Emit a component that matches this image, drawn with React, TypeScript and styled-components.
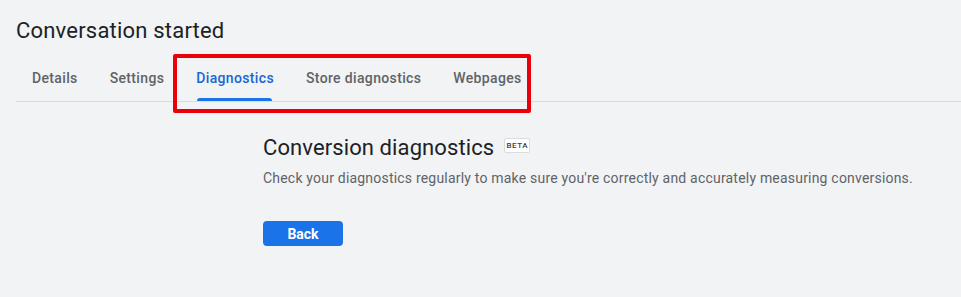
import React from 'react';
import styled, { createGlobalStyle } from 'styled-components';

const GlobalStyle = createGlobalStyle`
  html, body {
    margin: 0;
    padding: 0;
    background: #f1f3f4;
  }
  body {
    font-family: Roboto, "Liberation Sans", Arial, sans-serif;
    color: #202124;
  }
`;

const tabs = ['Details', 'Settings', 'Diagnostics', 'Store diagnostics', 'Webpages'];

export default function App() {
  const active = 'Diagnostics';

  return (
    <Page>
      <GlobalStyle />
      <Title>Conversation started</Title>
      <TabBar>
        {tabs.map(tab => (
          <Tab key={tab} active={tab === active}>
            {tab}
          </Tab>
        ))}
        <Highlight />
      </TabBar>
      <Content>
        <HeadingRow>
          <Heading>Conversion diagnostics</Heading>
          <Badge>BETA</Badge>
        </HeadingRow>
        <Description>
          Check your diagnostics regularly to make sure you're correctly and accurately measuring conversions.
        </Description>
        <BackButton>Back</BackButton>
      </Content>
    </Page>
  );
}

const Page = styled.div`
  width: 961px;
  height: 297px;
  box-sizing: border-box;
  padding: 16px 0 0 16px;
  overflow: hidden;
`;

const Title = styled.h1`
  margin: 0;
  font-size: 22px;
  font-weight: 400;
  line-height: 30px;
  letter-spacing: 0.2px;
  color: #202124;
`;

const TabBar = styled.div`
  position: relative;
  display: flex;
  margin-top: 13px;
  border-bottom: 1px solid #dadce0;
`;

const Tab = styled.div<{ active?: boolean }>`
  position: relative;
  box-sizing: border-box;
  padding: 0 16px 4px;
  height: 42px;
  display: flex;
  align-items: center;
  font-size: 14px;
  font-weight: 500;
  letter-spacing: 0.35px;
  color: ${p => (p.active ? '#1967d2' : '#5f6368')};

  &::after {
    content: '';
    display: ${p => (p.active ? 'block' : 'none')};
    position: absolute;
    left: 17px;
    right: 18px;
    bottom: 0;
    height: 3px;
    border-radius: 3px 3px 0 0;
    background: #1a73e8;
  }
`;

const Highlight = styled.div`
  position: absolute;
  left: 157px;
  top: -5px;
  width: 358px;
  height: 59px;
  box-sizing: border-box;
  border: 4px solid #e8000b;
  border-radius: 2px;
  pointer-events: none;
`;

const Content = styled.div`
  margin: 32px 0 0 247px;
  display: flex;
  flex-direction: column;
  align-items: flex-start;
`;

const HeadingRow = styled.div`
  display: flex;
  align-items: center;
  gap: 10px;
`;

const Heading = styled.h2`
  margin: 0;
  font-size: 22px;
  font-weight: 400;
  line-height: 28px;
  letter-spacing: 0.1px;
  color: #202124;
`;

const Badge = styled.span`
  display: flex;
  align-items: center;
  justify-content: center;
  box-sizing: border-box;
  width: 26px;
  height: 15px;
  border: 1px solid #dadce0;
  border-radius: 2px;
  font-size: 8px;
  font-weight: 500;
  letter-spacing: 0.5px;
  color: #3c4043;
  background: #fff;
  margin-top: -6px;
`;

const Description = styled.p`
  margin: 6px 0 0;
  font-size: 14px;
  line-height: 20px;
  letter-spacing: 0.2px;
  color: #5f6368;
`;

const BackButton = styled.button`
  margin-top: 33px;
  width: 80px;
  height: 25px;
  border: none;
  border-radius: 4px;
  background: #1a73e8;
  color: #fff;
  font-family: inherit;
  font-size: 14px;
  font-weight: 700;
  cursor: pointer;
`;
